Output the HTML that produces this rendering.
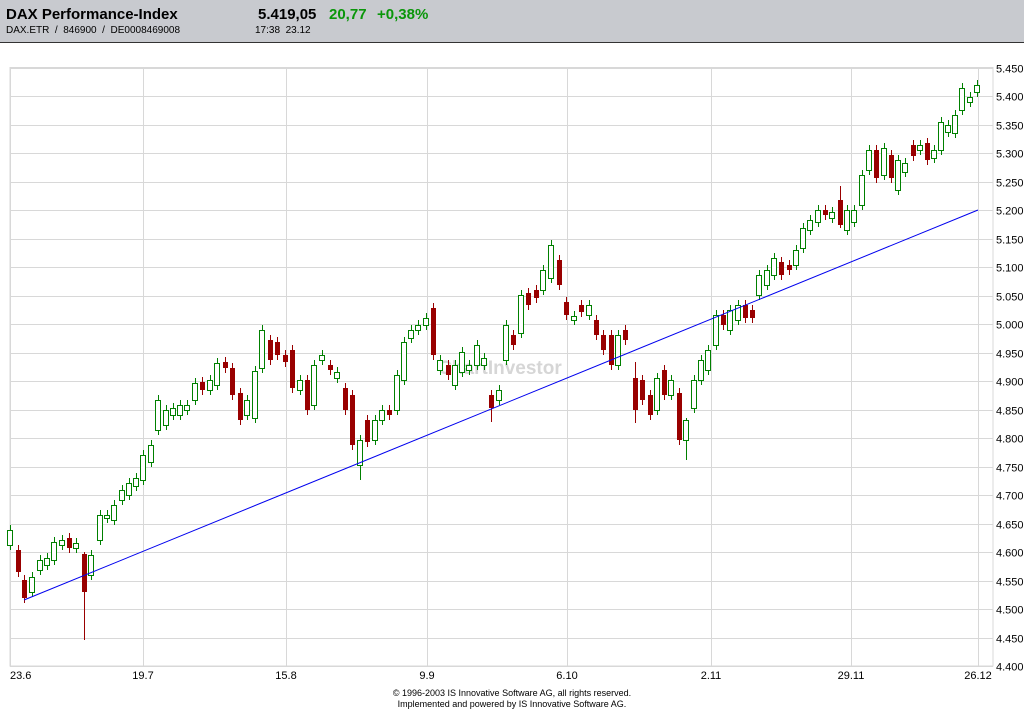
<!DOCTYPE html>
<html><head><meta charset="utf-8"><style>
body{margin:0;width:1024px;height:709px;background:#fff;font-family:"Liberation Sans",Arial,sans-serif;overflow:hidden;position:relative}
#hdr{position:absolute;left:0;top:0;width:1024px;height:42px;background:#c8cacf;border-bottom:1px solid #333}
.t{position:absolute;white-space:nowrap}
</style></head><body>
<div id="hdr">
<div class="t" style="left:6px;top:6px;font-size:15px;font-weight:bold;color:#000">DAX Performance-Index</div>
<div class="t" style="left:6px;top:25px;font-size:10px;color:#000">DAX.ETR &nbsp;/ &nbsp;846900 &nbsp;/ &nbsp;DE0008469008</div>
<div class="t" style="left:258px;top:6px;font-size:15px;font-weight:bold;color:#000">5.419,05</div>
<div class="t" style="left:329px;top:6px;font-size:15px;font-weight:bold;color:#0a960a">20,77</div>
<div class="t" style="left:377px;top:6px;font-size:15px;font-weight:bold;color:#0a960a">+0,38%</div>
<div class="t" style="left:255px;top:25px;font-size:10px;color:#000">17:38 &nbsp;23.12</div>
</div>
<svg id="c" width="1024" height="709" style="position:absolute;left:0;top:0" xmlns="http://www.w3.org/2000/svg"></svg>
<div class="t" style="left:0;width:1024px;text-align:center;top:688px;font-size:9px;line-height:11px;color:#000">© 1996-2003 IS Innovative Software AG, all rights reserved.<br>Implemented and powered by IS Innovative Software AG.</div>
<script>
var s='';
var L=10,R=993,T=67.5,B=666;
s+='<rect x="'+L+'" y="'+T+'" width="'+(R-L)+'" height="'+(B-T)+'" fill="#fff" stroke="#d8d8d8"/>';
for(var i=0;i<=21;i++){var y=Math.round(T+i*(B-T)/21)+.5;s+='<line x1="'+L+'" x2="'+R+'" y1="'+y+'" y2="'+y+'" stroke="#d8d8d8"/>';
var v=5450-i*50;var lab=Math.floor(v/1000)+'.'+String(v%1000).padStart(3,'0');
s+='<text x="996" y="'+(y+4)+'" font-size="11" font-family="Liberation Sans,sans-serif">'+lab+'</text>';}
var xs=[[10,'23.6'],[143,'19.7'],[286,'15.8'],[427,'9.9'],[567,'6.10'],[711,'2.11'],[851,'29.11'],[978,'26.12']];
xs.forEach(function(a){s+='<line x1="'+(a[0]+.5)+'" x2="'+(a[0]+.5)+'" y1="'+T+'" y2="'+B+'" stroke="#d8d8d8"/>';
s+='<text x="'+a[0]+'" y="679" font-size="11" text-anchor="'+(a[0]==10?'start':'middle')+'" font-family="Liberation Sans,sans-serif">'+a[1]+'</text>';});
s+='<text x="500" y="374" font-size="19" font-weight="bold" text-anchor="middle" fill="#d6d6d6" font-family="Liberation Sans,sans-serif">ChartInvestor</text>';
var d=[[10,530,545,'g'],[18,550,572,'r'],[24,580,598,'r'],[32,577,592,'g'],[40,560,570,'g'],[47,558,565,'g'],[54,542,560,'g'],[62,540,545,'g'],[69,538,548,'r'],[76,543,548,'g'],[84,554,592,'r',552,640],[91,555,575,'g'],[100,515,540,'g'],[107,515,518,'g'],[114,505,520,'g'],[122,490,500,'g'],[129,483,495,'g'],[136,478,486,'g'],[143,455,480,'g'],[151,445,462,'g'],[158,400,430,'g'],[166,410,425,'g'],[173,408,415,'g'],[180,405,415,'g'],[187,405,410,'g'],[195,383,400,'g'],[202,382,390,'r'],[210,380,390,'g'],[217,363,385,'g'],[225,362,368,'r'],[232,368,395,'r'],[240,393,420,'r'],[247,400,415,'g'],[255,371,418,'g'],[262,330,368,'g'],[270,340,360,'r'],[277,342,355,'r'],[285,355,362,'r'],[292,350,388,'r'],[300,380,390,'g'],[307,380,410,'r'],[314,365,405,'g'],[322,355,360,'g'],[330,365,370,'r'],[337,372,378,'g'],[345,388,410,'r'],[352,395,445,'r'],[360,440,465,'g',435,480],[367,420,442,'r'],[375,420,440,'g'],[382,410,420,'g'],[389,410,415,'r'],[397,375,410,'g'],[404,342,380,'g'],[411,330,338,'g'],[418,325,330,'g'],[426,318,325,'g'],[433,308,355,'r'],[440,360,370,'g'],[448,365,375,'r'],[455,365,385,'g'],[462,352,372,'g'],[469,365,370,'g'],[477,345,365,'g'],[484,358,365,'g'],[491,395,408,'r',390,422],[499,390,400,'g'],[506,325,360,'g'],[513,335,345,'r'],[521,295,333,'g'],[528,293,305,'r'],[536,290,298,'r'],[543,270,290,'g'],[551,245,278,'g'],[559,260,285,'r'],[566,302,315,'r'],[574,316,320,'g'],[581,305,312,'r'],[589,305,315,'g'],[596,320,335,'r'],[603,335,350,'r'],[611,335,365,'r'],[618,335,365,'g'],[625,330,340,'r'],[635,378,410,'r',362,423],[642,380,400,'r'],[650,395,415,'r'],[657,378,410,'g'],[664,370,395,'r'],[671,380,395,'g'],[679,393,440,'r'],[686,420,440,'g',418,460],[694,380,408,'g'],[701,360,380,'g'],[708,350,370,'g'],[716,315,345,'g'],[723,315,325,'r'],[730,310,330,'g'],[738,305,320,'g'],[745,305,318,'r'],[752,310,318,'r'],[759,275,295,'g'],[767,270,285,'g'],[774,258,275,'g'],[781,262,275,'r'],[789,265,270,'r'],[796,250,265,'g'],[803,228,248,'g'],[810,220,230,'g'],[818,210,222,'g'],[825,210,215,'r'],[832,212,218,'g'],[840,200,225,'r',186,228],[847,210,230,'g'],[854,210,222,'g'],[862,175,205,'g'],[869,150,170,'g'],[876,150,178,'r'],[884,148,175,'g'],[891,155,178,'r'],[898,160,190,'g'],[905,163,172,'g'],[913,145,156,'r'],[920,145,150,'g'],[927,143,160,'r'],[934,150,158,'g'],[941,122,150,'g'],[948,125,132,'g'],[955,115,133,'g'],[962,88,110,'g'],[970,97,102,'g'],[977,85,92,'g']];
d.forEach(function(c){var x=c[0],t=c[1],b=c[2],col=c[3]=='g'?'#008000':'#990000';var wt=c[4]||t-5,wb=c[5]||b+5;
s+='<line x1="'+(x+.5)+'" x2="'+(x+.5)+'" y1="'+wt+'" y2="'+wb+'" stroke="'+col+'"/>';
if(c[3]=='g')s+='<rect x="'+(x-2.5)+'" y="'+(t+.5)+'" width="5" height="'+Math.max(b-t,1)+'" fill="#fff" stroke="'+col+'"/>';
else s+='<rect x="'+(x-2)+'" y="'+t+'" width="5" height="'+Math.max(b-t,2)+'" fill="'+col+'"/>';});
s+='<line x1="24" y1="600" x2="978" y2="210" stroke="#0000ee" stroke-width="1"/>';
document.getElementById('c').innerHTML=s;
</script>
</body></html>
